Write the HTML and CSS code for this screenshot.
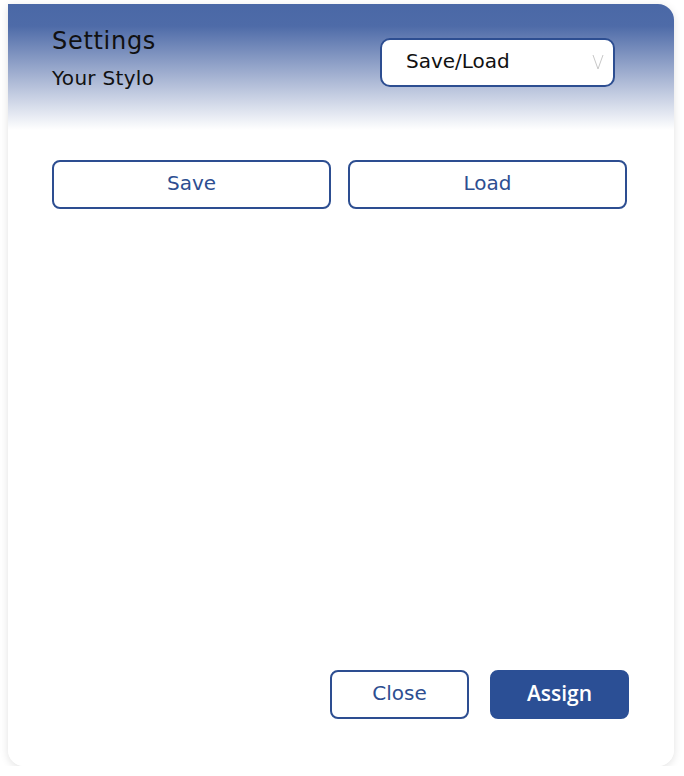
FILE: index.html
```html
<!DOCTYPE html>
<html>
<head>
<meta charset="utf-8">
<link rel="stylesheet" href="styles.css">
</head>
<body>
<div class="card">
  <div class="header">
    <div class="titles">
      <div class="title">Settings</div>
      <div class="subtitle">Your Stylo</div>
    </div>
    <div class="select">
      <span class="select-text">Save/Load</span>
      <svg class="chev" width="12" height="20" viewBox="0 0 12 20"><path d="M1 3 L6 17 L11 3" fill="none" stroke="#c8c8c8" stroke-width="1"/></svg>
    </div>
  </div>
  <div class="row">
    <button class="btn outline wide">Save</button>
    <button class="btn outline wide">Load</button>
  </div>
  <div class="spacer"></div>
  <div class="footer">
    <button class="btn outline small">Close</button>
    <button class="btn solid small">Assign</button>
  </div>
</div>
</body>
</html>
```
FILE: styles.css
```css
html, body { margin: 0; padding: 0; background: #ffffff; }
body { font-family: "DejaVu Sans", "Open Sans", sans-serif; }
.card {
  margin: 4px 0 0 8px;
  width: 666px;
  height: 762px;
  box-sizing: border-box;
  border-radius: 0 16px 16px 16px;
  background: linear-gradient(to bottom, #4a68a6 0px, #4e6ba8 22px, #a9b6d4 75px, #ffffff 126px, #ffffff 100%);
  box-shadow: 0 2px 8px rgba(0,0,0,0.12);
  display: flex;
  flex-direction: column;
  padding: 0 0 0 44px;
}
.header {
  display: flex;
  justify-content: space-between;
  align-items: flex-start;
  padding-top: 22px;
  height: 156px;
  box-sizing: border-box;
  width: 563px;
}
.title { font-size: 24px; line-height: 30px; color: #111; letter-spacing: 0.7px; }
.subtitle { font-size: 20px; line-height: 26px; margin-top: 9px; color: #111; letter-spacing: 0.3px; }
.select {
  margin-top: 12px;
  width: 235px;
  height: 49px;
  box-sizing: border-box;
  border: 2px solid #2d4e91;
  border-radius: 10px;
  background: #fff;
  display: flex;
  align-items: center;
  justify-content: space-between;
  padding: 0 9px 0 24px;
}
.select-text { font-size: 20px; color: #111; margin-top: -4px; }
.chev { margin-top: -2px; }
.row { display: flex; gap: 17px; width: 575px; }
.btn {
  font-family: "DejaVu Sans", "Open Sans", sans-serif;
  font-size: 20px;
  height: 49px;
  box-sizing: border-box;
  border-radius: 8px;
  cursor: pointer;
  padding: 0 0 4px 0;
}
.outline { background: #fff; border: 2px solid #2d4e91; color: #2d4e91; }
.solid { background: #2b4f95; border: 2px solid #2b4f95; color: #fff; font-family: "Open Sans", sans-serif; font-weight: 600; font-size: 21px; }
.wide { flex: 1; }
.small { width: 139px; }
.spacer { flex: 1; }
.footer {
  display: flex;
  gap: 21px;
  justify-content: flex-end;
  width: 577px;
  margin-bottom: 47px;
}
```
